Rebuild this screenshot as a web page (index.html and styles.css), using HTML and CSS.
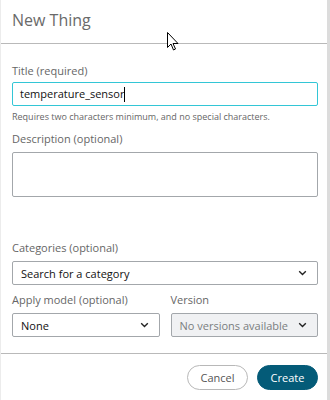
FILE: index.html
```html
<!DOCTYPE html>
<html lang="en">

<head>
    <meta charset="UTF-8">
    <title>New Thing</title>
    <link rel="stylesheet" href="styles.css">
</head>

<body>
    <div class="dialog">
        <div class="dialog-header">
            <h2>New Thing</h2>
        </div>
        <div class="dialog-body">
            <label class="label title-label">Title (required)</label>
            <div class="input active">temperature_sensor<span class="caret"></span></div>
            <p class="hint">Requires two characters minimum, and no special characters.</p>

            <label class="label desc-label">Description (optional)</label>
            <div class="textarea"></div>

            <label class="label cat-label">Categories (optional)</label>
            <div class="select">
                <span>Search for a category</span>
                <svg class="chevron" width="9" height="6" viewBox="0 0 9 6"><path d="M1.2 1.2l3.3 3.2 3.3-3.2" fill="none" stroke="#222" stroke-width="1.4"/></svg>
            </div>

            <div class="cols">
                <div class="col">
                    <label class="label">Apply model (optional)</label>
                    <div class="select">
                        <span>None</span>
                        <svg class="chevron" width="9" height="6" viewBox="0 0 9 6"><path d="M1.2 1.2l3.3 3.2 3.3-3.2" fill="none" stroke="#222" stroke-width="1.4"/></svg>
                    </div>
                </div>
                <div class="col">
                    <label class="label">Version</label>
                    <div class="select disabled">
                        <span>No versions available</span>
                        <svg class="chevron" width="9" height="6" viewBox="0 0 9 6"><path d="M1.2 1.2l3.3 3.2 3.3-3.2" fill="none" stroke="#222" stroke-width="1.4"/></svg>
                    </div>
                </div>
            </div>
        </div>
        <div class="dialog-footer">
            <button class="btn btn-cancel">Cancel</button>
            <button class="btn btn-create">Create</button>
        </div>
    </div>

    <svg class="pointer" width="12" height="19" viewBox="0 0 12 19">
        <path d="M0.5 0.5v15l3.5-3.5 2.5 6 2-1-2.5-5.5h5z" fill="#fff" stroke="#000" stroke-width="1"/>
    </svg>
</body>

</html>
```

FILE: styles.css
```css
html,
body {
    margin: 0;
    padding: 0;
    background: #fff;
}

body {
    font-family: "Open Sans", "Noto Sans", sans-serif;
    color: #666;
    width: 330px;
    height: 400px;
    overflow: hidden;
}

.dialog {
    width: 326px;
    height: 400px;
    border-left: 1px solid #ececec;
    border-right: 3px solid #dcdcdc;
}

.dialog-header {
    box-sizing: border-box;
    height: 44px;
    border-bottom: 1px solid #b9b9b9;
    padding-left: 11px;
}

.dialog-header h2 {
    margin: 0;
    padding-top: 9px;
    font-size: 16px;
    font-weight: 400;
    line-height: 22px;
    color: #6a6a6a;
}

.dialog-body {
    padding: 19px 9px 16px 11px;
    border-bottom: 1px solid #b9b9b9;
}

.label {
    display: block;
    font-size: 11px;
    line-height: 16px;
    color: #666;
    margin-bottom: 5px;
}

.title-label {
    margin-bottom: 3px;
}

.input,
.select,
.textarea {
    box-sizing: border-box;
    border: 1px solid #a3a7ab;
    border-radius: 2px;
    background: #fff;
}

.input {
    height: 24px;
    font-size: 11px;
    line-height: 22px;
    color: #111;
    padding-left: 7px;
}

.input.active {
    border-color: #33c6d6;
}

.caret {
    display: inline-block;
    width: 1px;
    height: 15px;
    background: #000;
    vertical-align: -4px;
}

.hint {
    margin: 4px 0 0;
    font-size: 9px;
    line-height: 14px;
    color: #666;
}

.desc-label {
    margin-top: 7px;
}

.textarea {
    height: 45px;
}

.cat-label {
    margin-top: 43px;
}

.select {
    height: 24px;
    display: flex;
    align-items: center;
    justify-content: space-between;
    padding: 0 10px 0 8px;
    font-size: 11px;
    color: #111;
}

.select.disabled {
    background: #f0f1f3;
    color: #7a7d80;
}

.chevron {
    display: block;
}

.cols {
    display: flex;
    gap: 11px;
    margin-top: 7px;
}

.col {
    flex: 1;
}

.dialog-footer {
    display: flex;
    justify-content: flex-end;
    gap: 9px;
    padding: 11px 9px 0 0;
}

.btn {
    font-family: "Open Sans", "Noto Sans", sans-serif;
    font-size: 11px;
    height: 25px;
    width: 61px;
    border-radius: 13px;
    cursor: pointer;
}

.btn-cancel {
    background: #fff;
    border: 1px solid #b8b8b8;
    color: #555;
}

.btn-create {
    background: #045b78;
    border: 1px solid #045b78;
    color: #fff;
}

.pointer {
    position: absolute;
    left: 167px;
    top: 32px;
}
```
